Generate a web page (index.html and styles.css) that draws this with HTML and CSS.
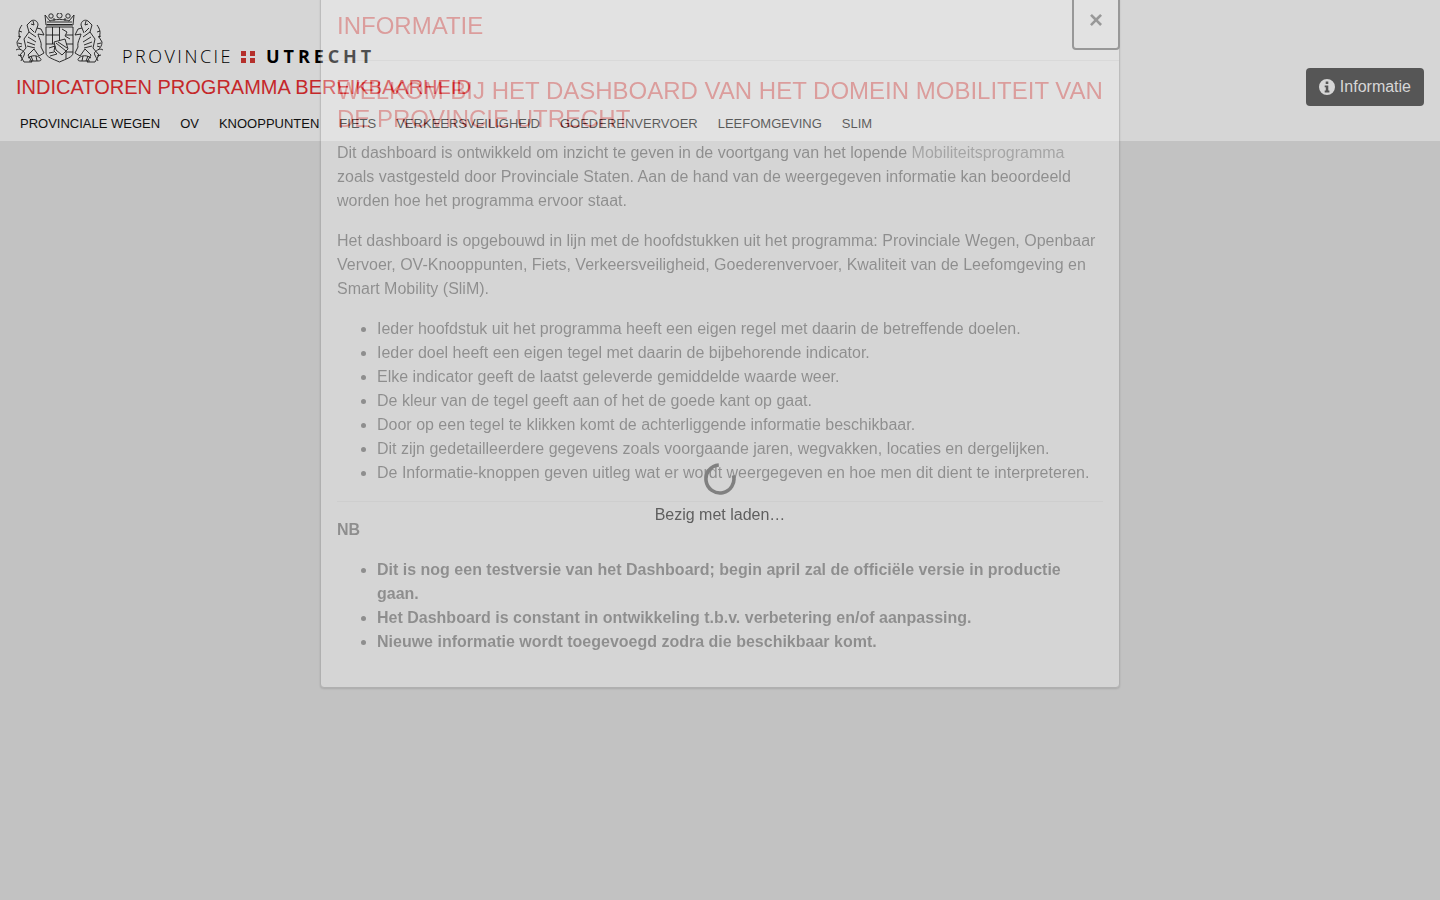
FILE: index.html
```html
<!DOCTYPE html>
<html lang="nl">
<head>
    <meta charset="UTF-8">
    <meta name="viewport" content="width=device-width, initial-scale=1.0">
    <title>Indicatoren Programma Bereikbaarheid</title>
    <link rel="stylesheet" href="styles.css">
</head>
<body>
    <header class="topbar">
        <div class="topbar-left">
            <div class="logo">
                <svg class="crest" viewBox="0 0 87 50" fill="none" stroke="#1a1a1a" stroke-width="0.9">
                    <!-- crown -->
                    <path d="M29 2l5 6c3-2 16-2 19 0l5-6-1 10H30z"/>
                    <circle cx="35" cy="3" r="2.200"/>
                    <circle cx="43.500" cy="2.500" r="2.600"/>
                    <circle cx="52" cy="3" r="2.200"/>
                    <path d="M31 9h25M31 11.500h25M38 5v3M49 5v3"/>
                    <!-- shield -->
                    <path d="M30 14h27v26c0 4-7 6-13.500 9C37 46 30 44 30 40z"/>
                    <path d="M30 22h13M36.500 14v17M43.500 14v17M30 31h27M50 31v15M50 39h7M50 22h7"/>
                    <path d="M38 29l11-3 3 10-6 6-6-5z" fill="#d6d6d6"/>
                    <path d="M40 30l10 8M42 29l9 6M46 16l5 3-2 4 5 3M33 35l6-2-1 5 3 3-7 2M33 40l5-1"/>
                    <!-- left lion and its mirror image -->
                    <g id="lion">
                        <path d="M15 8c3-2 7 0 7 4l-1 3 4 1 3 6-6-1c1 5 4 8 3 13l3 6-5 3-5-7-6 6 4 7H8l-4-7 6-7-2-9 5-7-2-7z"/>
                        <path d="M6 12c-3 4-4 8-2 12l-3 5c0 4 2 6 4 8M3 18l3 1M2 23l3 1M2 30l4 1M3 34l3-1"/>
                        <path d="M15 11l3 1M17 8l1 4M13 19l7 5M12 24l8 5M11 29l8 3M11 33l8 2M14 15l4 4M21 15l-2 5"/>
                        <path d="M0 37c3-2 6 0 8 2s-2 6-3 9M12 45c4-3 9-3 12 0 2 2 1 3-2 3H13M2 42l4 1M15 43l2 5M20 43l1 5"/>
                    </g>
                    <use href="#lion" transform="matrix(-1 0 0 1 87 0)"/>
                </svg>
                <div class="wordmark">
                    <span class="wordmark-light">PROVINCIE</span>
                    <span class="wordmark-dots"><i></i><i></i><i></i><i></i></span>
                    <span class="wordmark-bold">UTRECHT</span>
                </div>
            </div>
            <div class="app-title">INDICATOREN PROGRAMMA BEREIKBAARHEID</div>
            <nav class="mainnav">
                <a href="#">Provinciale Wegen</a>
                <a href="#">OV</a>
                <a href="#">Knooppunten</a>
                <a href="#">Fiets</a>
                <a href="#">Verkeersveiligheid</a>
                <a href="#">Goederenvervoer</a>
                <a href="#">Leefomgeving</a>
                <a href="#">SLIM</a>
            </nav>
        </div>
        <button class="info-btn" type="button">
            <svg class="info-icon" viewBox="0 0 16 16"><path fill-rule="evenodd" d="M8 0a8 8 0 1 0 0 16A8 8 0 0 0 8 0zM6.700 2.600h2.600v2.300H6.700zM5.700 6.400h3.600v5.200h1.100v1.900H5.700v-1.900h1.100V8.300H5.700z"/></svg>
            Informatie
        </button>
    </header>

    <div class="modal">
        <div class="modal-header">
            <h4>INFORMATIE</h4>
            <button class="modal-close" type="button">&times;</button>
        </div>
        <div class="modal-body">
            <h3>WELKOM BIJ HET DASHBOARD VAN HET DOMEIN MOBILITEIT VAN DE PROVINCIE UTRECHT</h3>
            <p>Dit dashboard is ontwikkeld om inzicht te geven in de voortgang van het lopende <a href="#">Mobiliteitsprogramma</a> zoals vastgesteld door Provinciale Staten. Aan de hand van de weergegeven informatie kan beoordeeld worden hoe het programma ervoor staat.</p>
            <p>Het dashboard is opgebouwd in lijn met de hoofdstukken uit het programma: Provinciale Wegen, Openbaar Vervoer, OV-Knooppunten, Fiets, Verkeersveiligheid, Goederenvervoer, Kwaliteit van de Leefomgeving en Smart Mobility (SliM).</p>
            <ul>
                <li>Ieder hoofdstuk uit het programma heeft een eigen regel met daarin de betreffende doelen.</li>
                <li>Ieder doel heeft een eigen tegel met daarin de bijbehorende indicator.</li>
                <li>Elke indicator geeft de laatst geleverde gemiddelde waarde weer.</li>
                <li>De kleur van de tegel geeft aan of het de goede kant op gaat.</li>
                <li>Door op een tegel te klikken komt de achterliggende informatie beschikbaar.</li>
                <li>Dit zijn gedetailleerdere gegevens zoals voorgaande jaren, wegvakken, locaties en dergelijken.</li>
                <li>De Informatie-knoppen geven uitleg wat er wordt weergegeven en hoe men dit dient te interpreteren.</li>
            </ul>
            <hr>
            <p class="nb"><b>NB</b></p>
            <ul class="nb-list">
                <li>Dit is nog een testversie van het Dashboard; begin april zal de officiële versie in productie gaan.</li>
                <li>Het Dashboard is constant in ontwikkeling t.b.v. verbetering en/of aanpassing.</li>
                <li>Nieuwe informatie wordt toegevoegd zodra die beschikbaar komt.</li>
            </ul>
        </div>
    </div>

    <div class="loader">
        <svg class="spinner" viewBox="0 0 32 32"><path d="M29.500 12.400A14 14 0 1 1 14.800 2" fill="none" stroke-width="3.600"/></svg>
        <div class="loader-text">Bezig met laden…</div>
    </div>
</body>
</html>
```

FILE: styles.css
```css
html, body {
    height: 100%;
}
body {
    font-family: "Liberation Sans", Arial, sans-serif;
    font-size: 16px;
    line-height: 24px;
    background-color: #c2c2c2;
    margin: 0;
    color: #1a1a1a;
    overflow: hidden;
}

/* header */
.topbar {
    display: flex;
    justify-content: space-between;
    height: 141px;
    box-sizing: border-box;
    padding: 13px 16px 0;
    background-color: #d6d6d6;
}
.logo {
    display: flex;
    align-items: flex-end;
    height: 50px;
}
.crest {
    width: 87px;
    height: 50px;
}
.wordmark {
    display: flex;
    align-items: center;
    margin: 0 0 -1px 19px;
    font-family: "Open Sans", sans-serif;
    font-size: 18px;
    line-height: 15px;
    color: #000;
}
.wordmark-light {
    font-weight: 300;
    letter-spacing: 2.5px;
}
.wordmark-bold {
    font-weight: 700;
    letter-spacing: 3.9px;
}
.wordmark-dots {
    display: grid;
    grid-template-columns: 5px 5px;
    grid-gap: 2px 4px;
    margin: 0 11px 0 8px;
}
.wordmark-dots i {
    display: block;
    height: 5px;
    background-color: #b5302c;
}
.app-title {
    margin-top: 11px;
    font-size: 20px;
    line-height: 26px;
    color: #c5282a;
}
.mainnav {
    display: flex;
    gap: 20px;
    margin: 15px 0 0 4px;
}
.mainnav a {
    font-size: 13px;
    line-height: 18px;
    color: #111;
    text-decoration: none;
    text-transform: uppercase;
}
.info-btn {
    display: flex;
    align-items: center;
    gap: 5px;
    align-self: flex-start;
    height: 38px;
    margin-top: 55px;
    padding: 0 13px;
    border: 0;
    border-radius: 4px;
    background-color: #565656;
    color: #d6d6d6;
    font: 16px "Liberation Sans", Arial, sans-serif;
}
.info-icon {
    width: 16px;
    height: 16px;
    fill: #d6d6d6;
}

/* modal, caught halfway through its fade in */
.modal {
    position: fixed;
    top: -4px;
    left: 320px;
    width: 800px;
    box-sizing: border-box;
    background-color: #fff;
    border: 1px solid #888;
    border-radius: 4px;
    box-shadow: 0 1px 2px rgba(0, 0, 0, 0.4);
    opacity: 0.31;
}
.modal-header {
    position: relative;
    height: 64px;
    box-sizing: border-box;
    padding: 14px 16px 0;
    border-bottom: 1px solid #e2e2e2;
}
.modal-header h4 {
    margin: 0;
    font-size: 24px;
    font-weight: 400;
    line-height: 30px;
    color: #e8221f;
}
.modal-close {
    position: absolute;
    top: -1px;
    right: -1px;
    width: 48px;
    height: 54px;
    padding: 0 0 7px;
    border: 2px solid #111;
    border-radius: 4px;
    background: none;
    color: #111;
    font: bold 24px "Liberation Sans", Arial, sans-serif;
}
.modal-body {
    padding: 16px 16px 17px;
}
.modal-body h3 {
    margin: 0 0 8px;
    font-size: 24px;
    font-weight: 400;
    line-height: 28px;
    color: #e8221f;
}
.modal-body p {
    margin: 0 0 16px;
}
.modal-body a {
    color: #666;
    text-decoration: none;
}
.modal-body ul {
    margin: 0 0 16px;
    padding-left: 40px;
}
.modal-body hr {
    margin: 16px 0 16px;
    border: 0;
    border-top: 1px solid #e8e8e8;
}
.nb-list {
    font-weight: bold;
}

/* busy indicator */
.loader {
    position: fixed;
    top: 463px;
    left: 0;
    right: 0;
    display: flex;
    flex-direction: column;
    align-items: center;
    gap: 8px;
}
.spinner {
    width: 32px;
    height: 32px;
    stroke: #808080;
}
.loader-text {
    color: #5f5f5f;
}
```
